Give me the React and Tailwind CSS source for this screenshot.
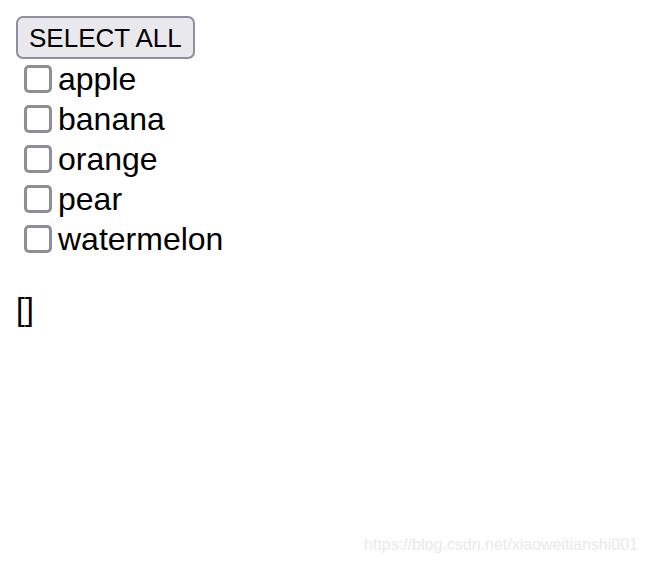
import { useState } from "react";

const fruits = ["apple", "banana", "orange", "pear", "watermelon"];

export default function App() {
    const [checked, setChecked] = useState([]);

    const toggle = (name) => {
        setChecked(prev =>
            prev.includes(name) ? prev.filter(f => f !== name) : [...prev, name]
        );
    };

    const selectAll = () => {
        setChecked(checked.length === fruits.length ? [] : [...fruits]);
    };

    return (
        <div className="relative w-[646px] h-[562px] bg-white text-black font-['Liberation_Sans',Arial,sans-serif]">
            <div className="pt-[16px] pl-[16px]">
                <button
                    type="button"
                    className="h-[43px] px-[11px] bg-[#e9e9ed] border-2 border-[#8f8f9d] rounded-[7px] text-[26px] leading-none text-black"
                    onClick={selectAll}
                >
                    SELECT ALL
                </button>

                <div className="flex flex-col">
                    {fruits.map(name => (
                        <label key={name} className="flex items-center h-[40px] cursor-pointer">
                            <span
                                className={
                                    "ml-[8px] mr-[6px] w-[28px] h-[28px] rounded-[5px] border-[3px] border-[#8e8e96] flex items-center justify-center " +
                                    (checked.includes(name) ? "bg-[#007aff] border-[#007aff]" : "bg-white")
                                }
                                onClick={(e) => { e.preventDefault(); toggle(name); }}
                            >
                                {checked.includes(name) && (
                                    <svg width="18" height="18" viewBox="0 0 24 24" fill="none" stroke="white" strokeWidth="3">
                                        <path d="M5 12l5 5 9-10" />
                                    </svg>
                                )}
                            </span>
                            <span className="text-[32px] leading-none">{name}</span>
                        </label>
                    ))}
                </div>

                <p className="mt-[32px] text-[32px] leading-[37px]">{JSON.stringify(checked)}</p>
            </div>

            <div className="absolute right-[8px] bottom-[9px] text-[16px] leading-none text-[#eaeaea]">
                https://blog.csdn.net/xiaoweitianshi001
            </div>
        </div>
    );
}
